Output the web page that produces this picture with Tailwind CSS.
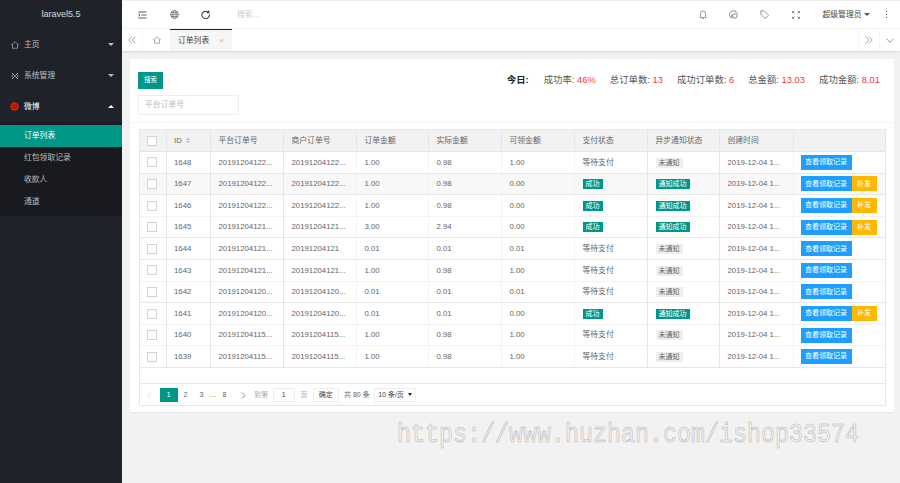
<!DOCTYPE html>
<html lang="zh">
<head>
<meta charset="utf-8">
<script src="https://cdn.jsdelivr.net/npm/@tailwindcss/browser@4"></script>
</head>
<body class="h-[483px] w-[900px] overflow-hidden bg-[#f2f2f2] font-['Liberation_Sans','Noto_Sans_CJK_SC',sans-serif] text-[7.800px] text-[#666]">
<div class="relative flex h-[483px] w-[900px]">
  <aside class="flex w-[122px] shrink-0 flex-col bg-[#20222a] text-white/70">
    <div class="flex h-[29px] items-center justify-center text-[9px] text-white/80">laravel5.5</div>
    <div class="flex h-[31px] items-center pl-[11px] pr-[8px]">
      <svg class="mr-[5px] h-[8px] w-[8px]" viewBox="0 0 16 16" fill="none" stroke="#bbb" stroke-width="1.300"><path d="M8 1.500 15 7.500h-2v7H3v-7H1z"/></svg>
      <span>主页</span><span class="ml-auto h-0 w-0 border-x-[3px] border-t-[3px] border-x-transparent border-t-white/70"></span>
    </div>
    <div class="flex h-[31px] items-center pl-[11px] pr-[8px]">
      <svg class="mr-[5px] h-[8px] w-[8px]" viewBox="0 0 16 16" fill="none" stroke="#ccc" stroke-width="1.800"><path d="M2 2l12 12M14 2 9.500 6.500M6.500 9.500 2 14M1 8h3M12 8h3"/></svg>
      <span>系统管理</span><span class="ml-auto h-0 w-0 border-x-[3px] border-t-[3px] border-x-transparent border-t-white/70"></span>
    </div>
    <div class="flex h-[31px] items-center pl-[10px] pr-[8px] text-white">
      <svg class="mr-[5px] h-[9px] w-[9px]" viewBox="0 0 16 16"><circle cx="8" cy="8" r="7.500" fill="#d81e06"/><path d="M3.500 6h9M3.500 10h9" stroke="#5a1a14" stroke-width="1.500"/></svg>
      <span>微博</span><span class="ml-auto h-0 w-0 border-x-[3px] border-b-[3px] border-x-transparent border-b-white"></span>
    </div>
    <div class="flex flex-col bg-[#181a1f] py-[3px]">
      <div class="flex h-[22px] items-center bg-[#009688] pl-[24px] text-white">订单列表</div>
      <div class="flex h-[22px] items-center pl-[24px]">红包领取记录</div>
      <div class="flex h-[22px] items-center pl-[24px]">收款人</div>
      <div class="flex h-[22px] items-center pl-[24px]">通道</div>
    </div>
  </aside>
  <main class="flex min-w-0 flex-1 flex-col">
    <header class="flex h-[29px] shrink-0 items-center border-y border-t-[#eee] border-b-[#f6f6f6] bg-white pl-[16px] pr-[13px]">
      <svg class="h-[8px] w-[9px]" viewBox="0 0 18 16" fill="none" stroke="#333" stroke-width="1.600"><path d="M1 2h16M7 8h10M1 14h16M1 5.500 4 8l-3 2.500"/></svg>
      <svg class="ml-[23px] h-[9px] w-[9px]" viewBox="0 0 16 16" fill="none" stroke="#666" stroke-width="1.300"><circle cx="8" cy="8" r="7"/><ellipse cx="8" cy="8" rx="3" ry="7"/><path d="M1 8h14M2 4.500h12M2 11.500h12"/></svg>
      <svg class="ml-[22px] h-[9px] w-[9px]" viewBox="0 0 16 16" fill="none" stroke="#333" stroke-width="1.800"><path d="M13.500 4.500A6.700 6.700 0 1 0 15 8M14 1v4h-4"/></svg>
      <span class="ml-[27px] text-[#ccc]">搜索...</span>
      <div class="ml-auto flex items-center">
        <svg class="h-[9px] w-[8px]" viewBox="0 0 14 16" fill="none" stroke="#666" stroke-width="1.200"><path d="M2.500 12V6a4.500 4.500 0 0 1 9 0v6l1 1.500H1.500zM5.500 15.300h3"/></svg>
        <svg class="ml-[22px] h-[9px] w-[9px]" viewBox="0 0 16 16" fill="none" stroke="#666" stroke-width="1.400"><path d="M5 14.500C2.500 13.500 1 11 1 8.500 1 4.500 4 1.500 8 1.500c3.500 0 6.500 2 7 5"/><circle cx="10.500" cy="10.500" r="4"/><path d="M5 14.500V8"/></svg>
        <svg class="ml-[22px] h-[9px] w-[9px]" viewBox="0 0 16 16" fill="none" stroke="#666" stroke-width="1.200"><path d="M1.500 1.500h6l7 7a1.200 1.200 0 0 1 0 1.500l-4.500 4.500a1.200 1.200 0 0 1-1.500 0l-7-7zM5 4.500h.5"/></svg>
        <svg class="ml-[23px] h-[8px] w-[8px]" viewBox="0 0 16 16" fill="none" stroke="#777" stroke-width="1.600"><path d="M1 4.500V1h3.500M1 1l4 4M11.500 1H15v3.500M15 1l-4 4M15 11.500V15h-3.500M15 15l-4-4M4.500 15H1v-3.500M1 15l4-4"/></svg>
        <span class="ml-[23px] text-[#444]">超级管理员</span>
        <span class="ml-[2px] h-0 w-0 border-x-[3px] border-t-[3px] border-x-transparent border-t-[#555]"></span>
        <span class="ml-[16px] flex flex-col gap-[1.500px]"><i class="block h-[1.500px] w-[1.500px] bg-[#733]"></i><i class="block h-[1.500px] w-[1.500px] bg-[#733]"></i><i class="block h-[1.500px] w-[1.500px] bg-[#733]"></i></span>
      </div>
    </header>
    <nav class="flex h-[22px] shrink-0 items-stretch bg-white shadow-[0_1px_2px_rgba(0,0,0,0.12)]">
      <div class="flex w-[21px] items-center justify-center border-r border-[#f6f6f6]"><svg class="h-[8px] w-[8px]" viewBox="0 0 16 16" fill="none" stroke="#666" stroke-width="1.200"><path d="M8 1 1.500 8 8 15M14.500 1 8 8l6.500 7"/></svg></div>
      <div class="flex w-[27px] items-center justify-center"><svg class="h-[8px] w-[8px]" viewBox="0 0 16 16" fill="none" stroke="#666" stroke-width="1.100"><path d="M8 1.500 15 7.500h-2v7H3v-7H1z"/></svg></div>
      <div class="flex w-[62px] items-center border-t border-[#20222a] bg-[#f6f6f6] pl-[8px] text-[#444]">订单列表<span class="ml-[10px] text-[#bbb]">×</span></div>
      <div class="ml-auto flex w-[22px] items-center justify-center border-x border-[#f6f6f6]"><svg class="h-[8px] w-[8px]" viewBox="0 0 16 16" fill="none" stroke="#666" stroke-width="1.200"><path d="m1.500 1 6.500 7-6.500 7M8 1l6.500 7L8 15"/></svg></div>
      <div class="flex w-[20px] items-center justify-center"><svg class="h-[5px] w-[8px]" viewBox="0 0 16 10" fill="none" stroke="#666" stroke-width="1.400"><path d="m1 1.500 7 7 7-7"/></svg></div>
    </nav>
    <section class="mx-[8px] mt-[8px] mr-[6px] flex h-[353px] flex-col rounded-[1px] bg-white shadow-[0_1px_1px_rgba(0,0,0,0.05)]">
      <div class="flex h-[64px] shrink-0 items-start border-b border-[#f6f6f6] pl-[8px] pr-[14px] pt-[13px]">
        <div class="flex flex-col items-start">
          <button class="h-[16.500px] w-[25px] bg-[#009688] text-[6.600px] text-white">搜索</button>
          <div class="mt-[6px] flex h-[20px] w-[101px] items-center border border-[#eee] pl-[6px] text-[#bbb]">平台订单号</div>
        </div>
        <div class="ml-auto flex gap-[14px] pt-[1px] text-[9.400px] leading-[13px] text-[#555]">
          <span class="mr-[1px] font-bold text-[#222]">今日:</span>
          <span>成功率: <b class="font-normal text-[#f33]">46%</b></span>
          <span>总订单数: <b class="font-normal text-[#f33]">13</b></span>
          <span>成功订单数: <b class="font-normal text-[#f33]">6</b></span>
          <span>总金额: <b class="font-normal text-[#f33]">13.03</b></span>
          <span>成功金额: <b class="font-normal text-[#f33]">8.01</b></span>
        </div>
      </div>
      <div class="ml-[9px] mr-[8px] mt-[6px] flex h-[277px] flex-col border border-[#e6e6e6]">
        <table class="w-full table-fixed border-collapse">
          <colgroup><col class="w-[26px]"><col class="w-[44px]"><col class="w-[73px]"><col class="w-[73px]"><col class="w-[72px]"><col class="w-[73px]"><col class="w-[73px]"><col class="w-[73px]"><col class="w-[72px]"><col class="w-[74px]"><col></colgroup>
          <thead>
            <tr class="h-[21.600px] bg-[#f2f2f2] text-left [&>th]:border-l [&>th]:border-[#e6e6e6] [&>th]:pl-[8px] [&>th]:font-normal">
              <th class="!border-l-0 !pl-[7px]"><span class="block h-[10px] w-[10px] border border-[#d2d2d2] bg-white"></span></th>
              <th class="!pl-[7.500px]">ID <span class="ml-[2px] inline-flex flex-col gap-[1px] align-middle"><i class="block h-0 w-0 border-x-[2.500px] border-b-[2.500px] border-x-transparent border-b-[#b2b2b2]"></i><i class="block h-0 w-0 border-x-[2.500px] border-t-[2.500px] border-x-transparent border-t-[#b2b2b2]"></i></span></th>
              <th>平台订单号</th><th>商户订单号</th><th>订单金额</th><th>实际金额</th><th>可领金额</th><th>支付状态</th><th>异步通知状态</th><th>创建时间</th><th></th>
            </tr>
          </thead>
          <tbody class="[&>tr]:h-[21.600px] [&>tr]:border-t [&>tr]:border-[#e6e6e6] [&_td]:overflow-hidden [&_td]:border-l [&_td]:border-[#e6e6e6] [&_td]:pl-[8px] [&_td]:whitespace-nowrap [&_td:nth-child(2)]:pl-[7.500px] [&_td:nth-child(11)]:pl-[7px] [&_td:nth-child(5)]:border-l-[#f3f3f3] [&_td:nth-child(6)]:border-l-[#f3f3f3] [&_td:nth-child(7)]:border-l-[#f3f3f3] [&_td:nth-child(8)]:border-l-[#f3f3f3] [&_td:nth-child(11)]:border-l-[#f3f3f3]">
            <tr><td class="!border-l-0 !pl-[7px]"><span class="block h-[10px] w-[10px] border border-[#d2d2d2]"></span></td><td>1648</td><td>20191204122...</td><td>20191204122...</td><td>1.00</td><td>0.98</td><td>1.00</td><td>等待支付</td><td><span class="inline-block h-[10px] bg-[#eee] px-[3px] text-[7px] leading-[10px]">未通知</span></td><td>2019-12-04 1...</td><td><div class="flex"><span class="flex h-[15px] w-[51px] items-center justify-center bg-[#1e9fff] text-[7px] text-white">查看领取记录</span></div></td></tr>
            <tr class="bg-[#f8f8f8]"><td class="!border-l-0 !pl-[7px]"><span class="block h-[10px] w-[10px] border border-[#d2d2d2] bg-white"></span></td><td>1647</td><td>20191204122...</td><td>20191204122...</td><td>1.00</td><td>0.98</td><td>0.00</td><td><span class="inline-block h-[10px] bg-[#009688] px-[3px] text-[7px] leading-[10px] text-white">成功</span></td><td><span class="inline-block h-[10px] bg-[#009688] px-[3px] text-[7px] leading-[10px] text-white">通知成功</span></td><td>2019-12-04 1...</td><td><div class="flex"><span class="flex h-[15px] w-[51px] items-center justify-center bg-[#1e9fff] text-[7px] text-white">查看领取记录</span><span class="flex h-[15px] w-[25px] items-center justify-center bg-[#ffb800] text-[7px] text-white">补发</span></div></td></tr>
            <tr><td class="!border-l-0 !pl-[7px]"><span class="block h-[10px] w-[10px] border border-[#d2d2d2]"></span></td><td>1646</td><td>20191204122...</td><td>20191204122...</td><td>1.00</td><td>0.98</td><td>0.00</td><td><span class="inline-block h-[10px] bg-[#009688] px-[3px] text-[7px] leading-[10px] text-white">成功</span></td><td><span class="inline-block h-[10px] bg-[#009688] px-[3px] text-[7px] leading-[10px] text-white">通知成功</span></td><td>2019-12-04 1...</td><td><div class="flex"><span class="flex h-[15px] w-[51px] items-center justify-center bg-[#1e9fff] text-[7px] text-white">查看领取记录</span><span class="flex h-[15px] w-[25px] items-center justify-center bg-[#ffb800] text-[7px] text-white">补发</span></div></td></tr>
            <tr class="!border-[#f3f3f3]"><td class="!border-l-0 !pl-[7px]"><span class="block h-[10px] w-[10px] border border-[#d2d2d2]"></span></td><td>1645</td><td>20191204121...</td><td>20191204121...</td><td>3.00</td><td>2.94</td><td>0.00</td><td><span class="inline-block h-[10px] bg-[#009688] px-[3px] text-[7px] leading-[10px] text-white">成功</span></td><td><span class="inline-block h-[10px] bg-[#009688] px-[3px] text-[7px] leading-[10px] text-white">通知成功</span></td><td>2019-12-04 1...</td><td><div class="flex"><span class="flex h-[15px] w-[51px] items-center justify-center bg-[#1e9fff] text-[7px] text-white">查看领取记录</span><span class="flex h-[15px] w-[25px] items-center justify-center bg-[#ffb800] text-[7px] text-white">补发</span></div></td></tr>
            <tr><td class="!border-l-0 !pl-[7px]"><span class="block h-[10px] w-[10px] border border-[#d2d2d2]"></span></td><td>1644</td><td>20191204121...</td><td>20191204121</td><td>0.01</td><td>0.01</td><td>0.01</td><td>等待支付</td><td><span class="inline-block h-[10px] bg-[#eee] px-[3px] text-[7px] leading-[10px]">未通知</span></td><td>2019-12-04 1...</td><td><div class="flex"><span class="flex h-[15px] w-[51px] items-center justify-center bg-[#1e9fff] text-[7px] text-white">查看领取记录</span></div></td></tr>
            <tr><td class="!border-l-0 !pl-[7px]"><span class="block h-[10px] w-[10px] border border-[#d2d2d2]"></span></td><td>1643</td><td>20191204121...</td><td>20191204121...</td><td>1.00</td><td>0.98</td><td>1.00</td><td>等待支付</td><td><span class="inline-block h-[10px] bg-[#eee] px-[3px] text-[7px] leading-[10px]">未通知</span></td><td>2019-12-04 1...</td><td><div class="flex"><span class="flex h-[15px] w-[51px] items-center justify-center bg-[#1e9fff] text-[7px] text-white">查看领取记录</span></div></td></tr>
            <tr class="!border-[#f3f3f3]"><td class="!border-l-0 !pl-[7px]"><span class="block h-[10px] w-[10px] border border-[#d2d2d2]"></span></td><td>1642</td><td>20191204120...</td><td>20191204120...</td><td>0.01</td><td>0.01</td><td>0.01</td><td>等待支付</td><td><span class="inline-block h-[10px] bg-[#eee] px-[3px] text-[7px] leading-[10px]">未通知</span></td><td>2019-12-04 1...</td><td><div class="flex"><span class="flex h-[15px] w-[51px] items-center justify-center bg-[#1e9fff] text-[7px] text-white">查看领取记录</span></div></td></tr>
            <tr><td class="!border-l-0 !pl-[7px]"><span class="block h-[10px] w-[10px] border border-[#d2d2d2]"></span></td><td>1641</td><td>20191204120...</td><td>20191204120...</td><td>0.01</td><td>0.01</td><td>0.00</td><td><span class="inline-block h-[10px] bg-[#009688] px-[3px] text-[7px] leading-[10px] text-white">成功</span></td><td><span class="inline-block h-[10px] bg-[#009688] px-[3px] text-[7px] leading-[10px] text-white">通知成功</span></td><td>2019-12-04 1...</td><td><div class="flex"><span class="flex h-[15px] w-[51px] items-center justify-center bg-[#1e9fff] text-[7px] text-white">查看领取记录</span><span class="flex h-[15px] w-[25px] items-center justify-center bg-[#ffb800] text-[7px] text-white">补发</span></div></td></tr>
            <tr class="!border-[#f3f3f3]"><td class="!border-l-0 !pl-[7px]"><span class="block h-[10px] w-[10px] border border-[#d2d2d2]"></span></td><td>1640</td><td>20191204115...</td><td>20191204115...</td><td>1.00</td><td>0.98</td><td>1.00</td><td>等待支付</td><td><span class="inline-block h-[10px] bg-[#eee] px-[3px] text-[7px] leading-[10px]">未通知</span></td><td>2019-12-04 1...</td><td><div class="flex"><span class="flex h-[15px] w-[51px] items-center justify-center bg-[#1e9fff] text-[7px] text-white">查看领取记录</span></div></td></tr>
            <tr class="!border-t-[#f3f3f3] border-b"><td class="!border-l-0 !pl-[7px]"><span class="block h-[10px] w-[10px] border border-[#d2d2d2]"></span></td><td>1639</td><td>20191204115...</td><td>20191204115...</td><td>1.00</td><td>0.98</td><td>1.00</td><td>等待支付</td><td><span class="inline-block h-[10px] bg-[#eee] px-[3px] text-[7px] leading-[10px]">未通知</span></td><td>2019-12-04 1...</td><td><div class="flex"><span class="flex h-[15px] w-[51px] items-center justify-center bg-[#1e9fff] text-[7px] text-white">查看领取记录</span></div></td></tr>
          </tbody>
        </table>
        <div class="mt-auto flex h-[22px] items-center border-t border-[#e6e6e6] pl-[7px] pt-[1px] text-[7px]">
          <span class="flex w-[13px]"><svg class="h-[7px] w-[5px]" viewBox="0 0 10 14" fill="none" stroke="#ccc" stroke-width="1.500"><path d="M8 1 2 7l6 6"/></svg></span>
          <span class="flex h-[14.300px] w-[17.500px] items-center justify-center bg-[#009688] text-white">1</span>
          <span class="w-[16px] text-center">2</span><span class="w-[16px] text-center">3</span><span class="w-[7px] text-center">…</span><span class="w-[16px] text-center">8</span>
          <span class="ml-[6px] flex w-[9px] justify-center"><svg class="h-[7px] w-[5px]" viewBox="0 0 10 14" fill="none" stroke="#555" stroke-width="1.500"><path d="m2 1 6 6-6 6"/></svg></span>
          <span class="ml-[6.500px] text-[#aaa]">到第</span>
          <span class="ml-[5px] flex h-[14.300px] w-[21.500px] items-center justify-center border border-[#eee] text-[#636]">1</span>
          <span class="ml-[6px] w-[7px] text-[#aaa]">页</span>
          <span class="ml-[5.500px] flex h-[14.300px] w-[25.500px] items-center justify-center border border-[#eee] text-[#444]">确定</span>
          <span class="ml-[5.500px] w-[25px] whitespace-nowrap">共 80 条</span>
          <span class="ml-[5px] flex h-[14.300px] w-[42px] items-center justify-center gap-[4px] border border-[#eee] text-[#444]">10 条/页 <i class="block h-0 w-0 border-x-[2px] border-t-[3px] border-x-transparent border-t-[#222]"></i></span>
        </div>
      </div>
    </section>
  </main>
  <div class="absolute left-[397px] top-[420px] origin-top scale-y-115 opacity-95 font-['Liberation_Mono',monospace] text-[23.340px] leading-[26px] whitespace-nowrap text-[#f2f2f2] [-webkit-text-stroke:0.5px_#b4b4b4]">https://www.huzhan.com/ishop33574</div>
</div>
</body>
</html>
